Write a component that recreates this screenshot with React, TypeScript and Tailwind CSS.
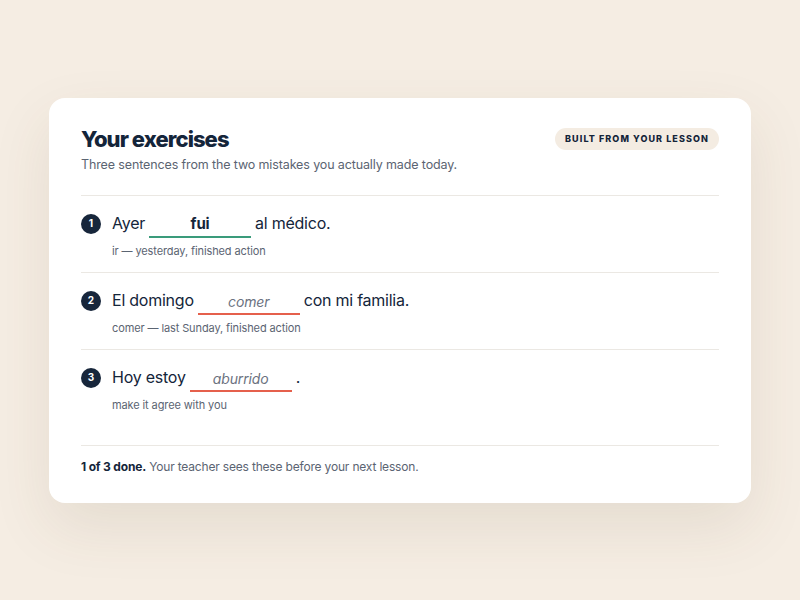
import React from "react";

type Row = {
  n: number;
  before: string;
  after: string;
  value: string;
  filled: boolean;
  hint: string;
};

const rows: Row[] = [
  { n: 1, before: "Ayer", after: "al médico.", value: "fui", filled: true, hint: "ir — yesterday, finished action" },
  { n: 2, before: "El domingo", after: "con mi familia.", value: "comer", filled: false, hint: "comer — last Sunday, finished action" },
  { n: 3, before: "Hoy estoy", after: ".", value: "aburrido", filled: false, hint: "make it agree with you" },
];

function Blank({ value, filled }: { value: string; filled: boolean }) {
  return filled ? (
    <span className="mx-[4px] inline-flex h-[28px] w-[102px] items-center justify-center border-b-2 border-[#3a9b7b] pt-[3px] text-[15px] font-bold tracking-[-0.01em] text-[#14253a]">
      {value}
    </span>
  ) : (
    <span className="mx-[4px] inline-flex h-[28px] w-[102px] items-center justify-center border-b-2 border-[#e5604c] pt-[3px] text-[14px] italic tracking-[-0.01em] text-[#6b7280]">
      {value}
    </span>
  );
}

export default function App() {
  return (
    <div
      className="flex min-h-screen w-full items-center justify-center bg-[#f5ede3]"
      style={{ fontFamily: "Inter, 'Noto Sans', sans-serif" }}
    >
      <div className="w-[702px] rounded-2xl bg-white px-8 pt-[27px] pb-[26px] shadow-[0_24px_60px_rgba(90,70,40,0.10)]">
        <div className="flex items-start justify-between">
          <div>
            <h1 className="text-[22px] leading-[28px] font-extrabold tracking-[-0.042em] text-[#14253a]">Your exercises</h1>
            <p className="mt-[2px] text-[12.5px] leading-[20px] tracking-[-0.01em] text-[#5b6472]">
              Three sentences from the two mistakes you actually made today.
            </p>
          </div>
          <span className="mt-[3px] rounded-full bg-[#f4ece2] px-[10px] py-[5px] text-[9px] leading-[12px] font-extrabold tracking-[0.12em] text-[#14253a]">
            BUILT FROM YOUR LESSON
          </span>
        </div>

        <div className="mt-[20px]">
          {rows.map((r) => (
            <div key={r.n} className="flex gap-[11px] border-t border-[#ebe8e3] pt-[14px] pb-[13px]">
              <div className="flex h-[28px] items-center">
                <span className="flex h-5 w-5 items-center justify-center rounded-full bg-[#17263b] text-[10px] font-bold text-white">
                  {r.n}
                </span>
              </div>
              <div>
                <div className="flex h-[28px] items-center text-[16px] tracking-[-0.015em] text-[#14253a]">
                  <span className="-mt-[2px]">{r.before}</span>
                  <Blank value={r.value} filled={r.filled} />
                  <span className="-mt-[2px]">{r.after}</span>
                </div>
                <p className="mt-[5px] text-[11px] leading-[16px] tracking-[-0.01em] text-[#5b6472]">{r.hint}</p>
              </div>
            </div>
          ))}
        </div>

        <div className="mt-[19px] border-t border-[#ebe8e3] pt-[11px] text-[12px] leading-[20px] tracking-[-0.015em] text-[#5b6472]">
          <span className="font-bold text-[#14253a]">1 of 3 done.</span> Your teacher sees these before your next lesson.
        </div>
      </div>
    </div>
  );
}
